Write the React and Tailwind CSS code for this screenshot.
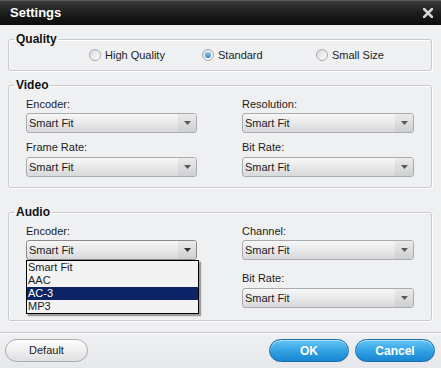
import React from 'react';

const OPTIONS = ['Smart Fit', 'AAC', 'AC-3', 'MP3'];

function Radio({ label, checked, className = '' }) {
    return (
        <div className={`flex items-center ${className}`}>
            <span className="w-[12px] h-[12px] rounded-full border border-[#a6a8ab] bg-gradient-to-br from-[#d9dadc] to-[#ffffff] flex items-center justify-center">
                {checked && <span className="w-[6px] h-[6px] rounded-full bg-gradient-to-b from-[#8fd0f5] to-[#2f82c6]" />}
            </span>
            <span className="ml-[4px]">{label}</span>
        </div>
    );
}

function Select({ className = '', value = 'Smart Fit', active = false }) {
    return (
        <div className={`h-[20px] rounded-[3px] border ${active ? 'border-[#8a8a8a]' : 'border-[#a9abae]'} bg-gradient-to-b from-[#f7f7f7] to-[#d8d9db] flex items-center pl-[2px] ${className}`}>
            <span className="flex-1 leading-[18px]">{value}</span>
            <span className="w-[18px] h-full flex items-center justify-center rounded-r-[2px] bg-gradient-to-b from-[#ebebec] to-[#cdcfd1]">
                <svg width="7" height="4" viewBox="0 0 7 4">
                    <path d="M0 0h7L3.5 4z" fill={active ? '#333' : '#5a5a5a'} />
                </svg>
            </span>
        </div>
    );
}

function Field({ label, children, className = '' }) {
    return (
        <div className={className}>
            <div className="leading-[13px]">{label}</div>
            {children}
        </div>
    );
}

function Group({ title, className = '', children }) {
    return (
        <fieldset className={`border border-[#c7c9cd] rounded-[3px] shadow-[inset_1px_1px_0_#ffffff,1px_1px_0_#ffffff] ${className}`}>
            <legend className="ml-[5px] px-[2px] font-bold text-[12px] leading-[14px] text-[#111]">{title}</legend>
            {children}
        </fieldset>
    );
}

export default function App() {
    return (
        <div className="w-[441px] h-[368px] overflow-hidden flex flex-col bg-[#eef0f2] text-[11px] text-[#1c1c1c] font-['Liberation_Sans',Arial,sans-serif]">
            {/* title bar */}
            <div className="h-[25px] shrink-0 flex items-center justify-between pl-[10px] pr-[8px] border-t border-[#5e5e5e] bg-gradient-to-b from-[#3a3a3a] via-[#1d1d1d] to-[#0c0c0c]">
                <span className="text-white font-bold text-[13px]">Settings</span>
                <svg width="10" height="10" viewBox="0 0 10 10">
                    <path d="M1 1L9 9M9 1L1 9" stroke="#d6d6d6" strokeWidth="2.6" strokeLinecap="square" />
                </svg>
            </div>

            <div className="pl-[8px] pr-[9px] flex flex-col">
                <Group title="Quality" className="mt-[7px] pb-[7px]">
                    <div className="h-[17px] flex items-center pl-[80px] pt-[1px]">
                        <Radio label="High Quality" className="w-[113px]" />
                        <Radio label="Standard" checked className="w-[114px]" />
                        <Radio label="Small Size" />
                    </div>
                </Group>

                <Group title="Video" className="mt-[7px] pt-[6px] pb-[10px]">
                    <div className="flex gap-x-[45px] pl-[17px]">
                        <div className="w-[171px]">
                            <Field label="Encoder:"><Select className="mt-[2px]" /></Field>
                            <Field label="Frame Rate:" className="mt-[8px]"><Select className="mt-[3px]" /></Field>
                        </div>
                        <div className="w-[172px]">
                            <Field label="Resolution:"><Select className="mt-[2px]" /></Field>
                            <Field label="Bit Rate:" className="mt-[8px]"><Select className="mt-[3px]" /></Field>
                        </div>
                    </div>
                </Group>

                <Group title="Audio" className="mt-[17px] pt-[6px] pb-[12px]">
                    <div className="flex gap-x-[45px] pl-[17px]">
                        <div className="w-[171px]">
                            <Field label="Encoder:" className="relative">
                                <Select className="mt-[2px]" active />
                                <div className="absolute left-0 top-full w-[173px] z-10 border border-black bg-[#f3f3f4] shadow-[2px_2px_1px_rgba(0,0,0,0.35)]">
                                    {OPTIONS.map(o => (
                                        <div
                                            key={o}
                                            className={`h-[13px] leading-[13px] pl-[1px] ${o === 'AC-3' ? 'bg-[#0c2466] text-white' : ''}`}
                                        >
                                            {o}
                                        </div>
                                    ))}
                                </div>
                            </Field>
                        </div>
                        <div className="w-[172px]">
                            <Field label="Channel:"><Select className="mt-[2px]" /></Field>
                            <Field label="Bit Rate:" className="mt-[12px]"><Select className="mt-[3px]" /></Field>
                        </div>
                    </div>
                </Group>
            </div>

            {/* footer */}
            <div className="mt-[11px] flex-1 border-t border-[#c3c5c9] shadow-[inset_0_1px_0_#ffffff] bg-gradient-to-b from-[#eef0f2] to-[#e6e8eb] flex items-start pt-[6px] pl-[5px] pr-[6px]">
                <button className="w-[83px] h-[23px] rounded-full border border-[#a9abae] bg-gradient-to-b from-[#fdfdfd] to-[#dfe0e2] text-[11px] text-[#222]">
                    Default
                </button>
                <button className="ml-auto w-[80px] h-[23px] rounded-full border border-[#1c6cab] bg-gradient-to-b from-[#63c6f4] via-[#33a3e4] to-[#1785d2] text-white font-bold text-[12px] shadow-[inset_0_1px_0_rgba(255,255,255,0.5)]">
                    OK
                </button>
                <button className="ml-[6px] w-[80px] h-[23px] rounded-full border border-[#1c6cab] bg-gradient-to-b from-[#63c6f4] via-[#33a3e4] to-[#1785d2] text-white font-bold text-[12px] shadow-[inset_0_1px_0_rgba(255,255,255,0.5)]">
                    Cancel
                </button>
            </div>
        </div>
    );
}
